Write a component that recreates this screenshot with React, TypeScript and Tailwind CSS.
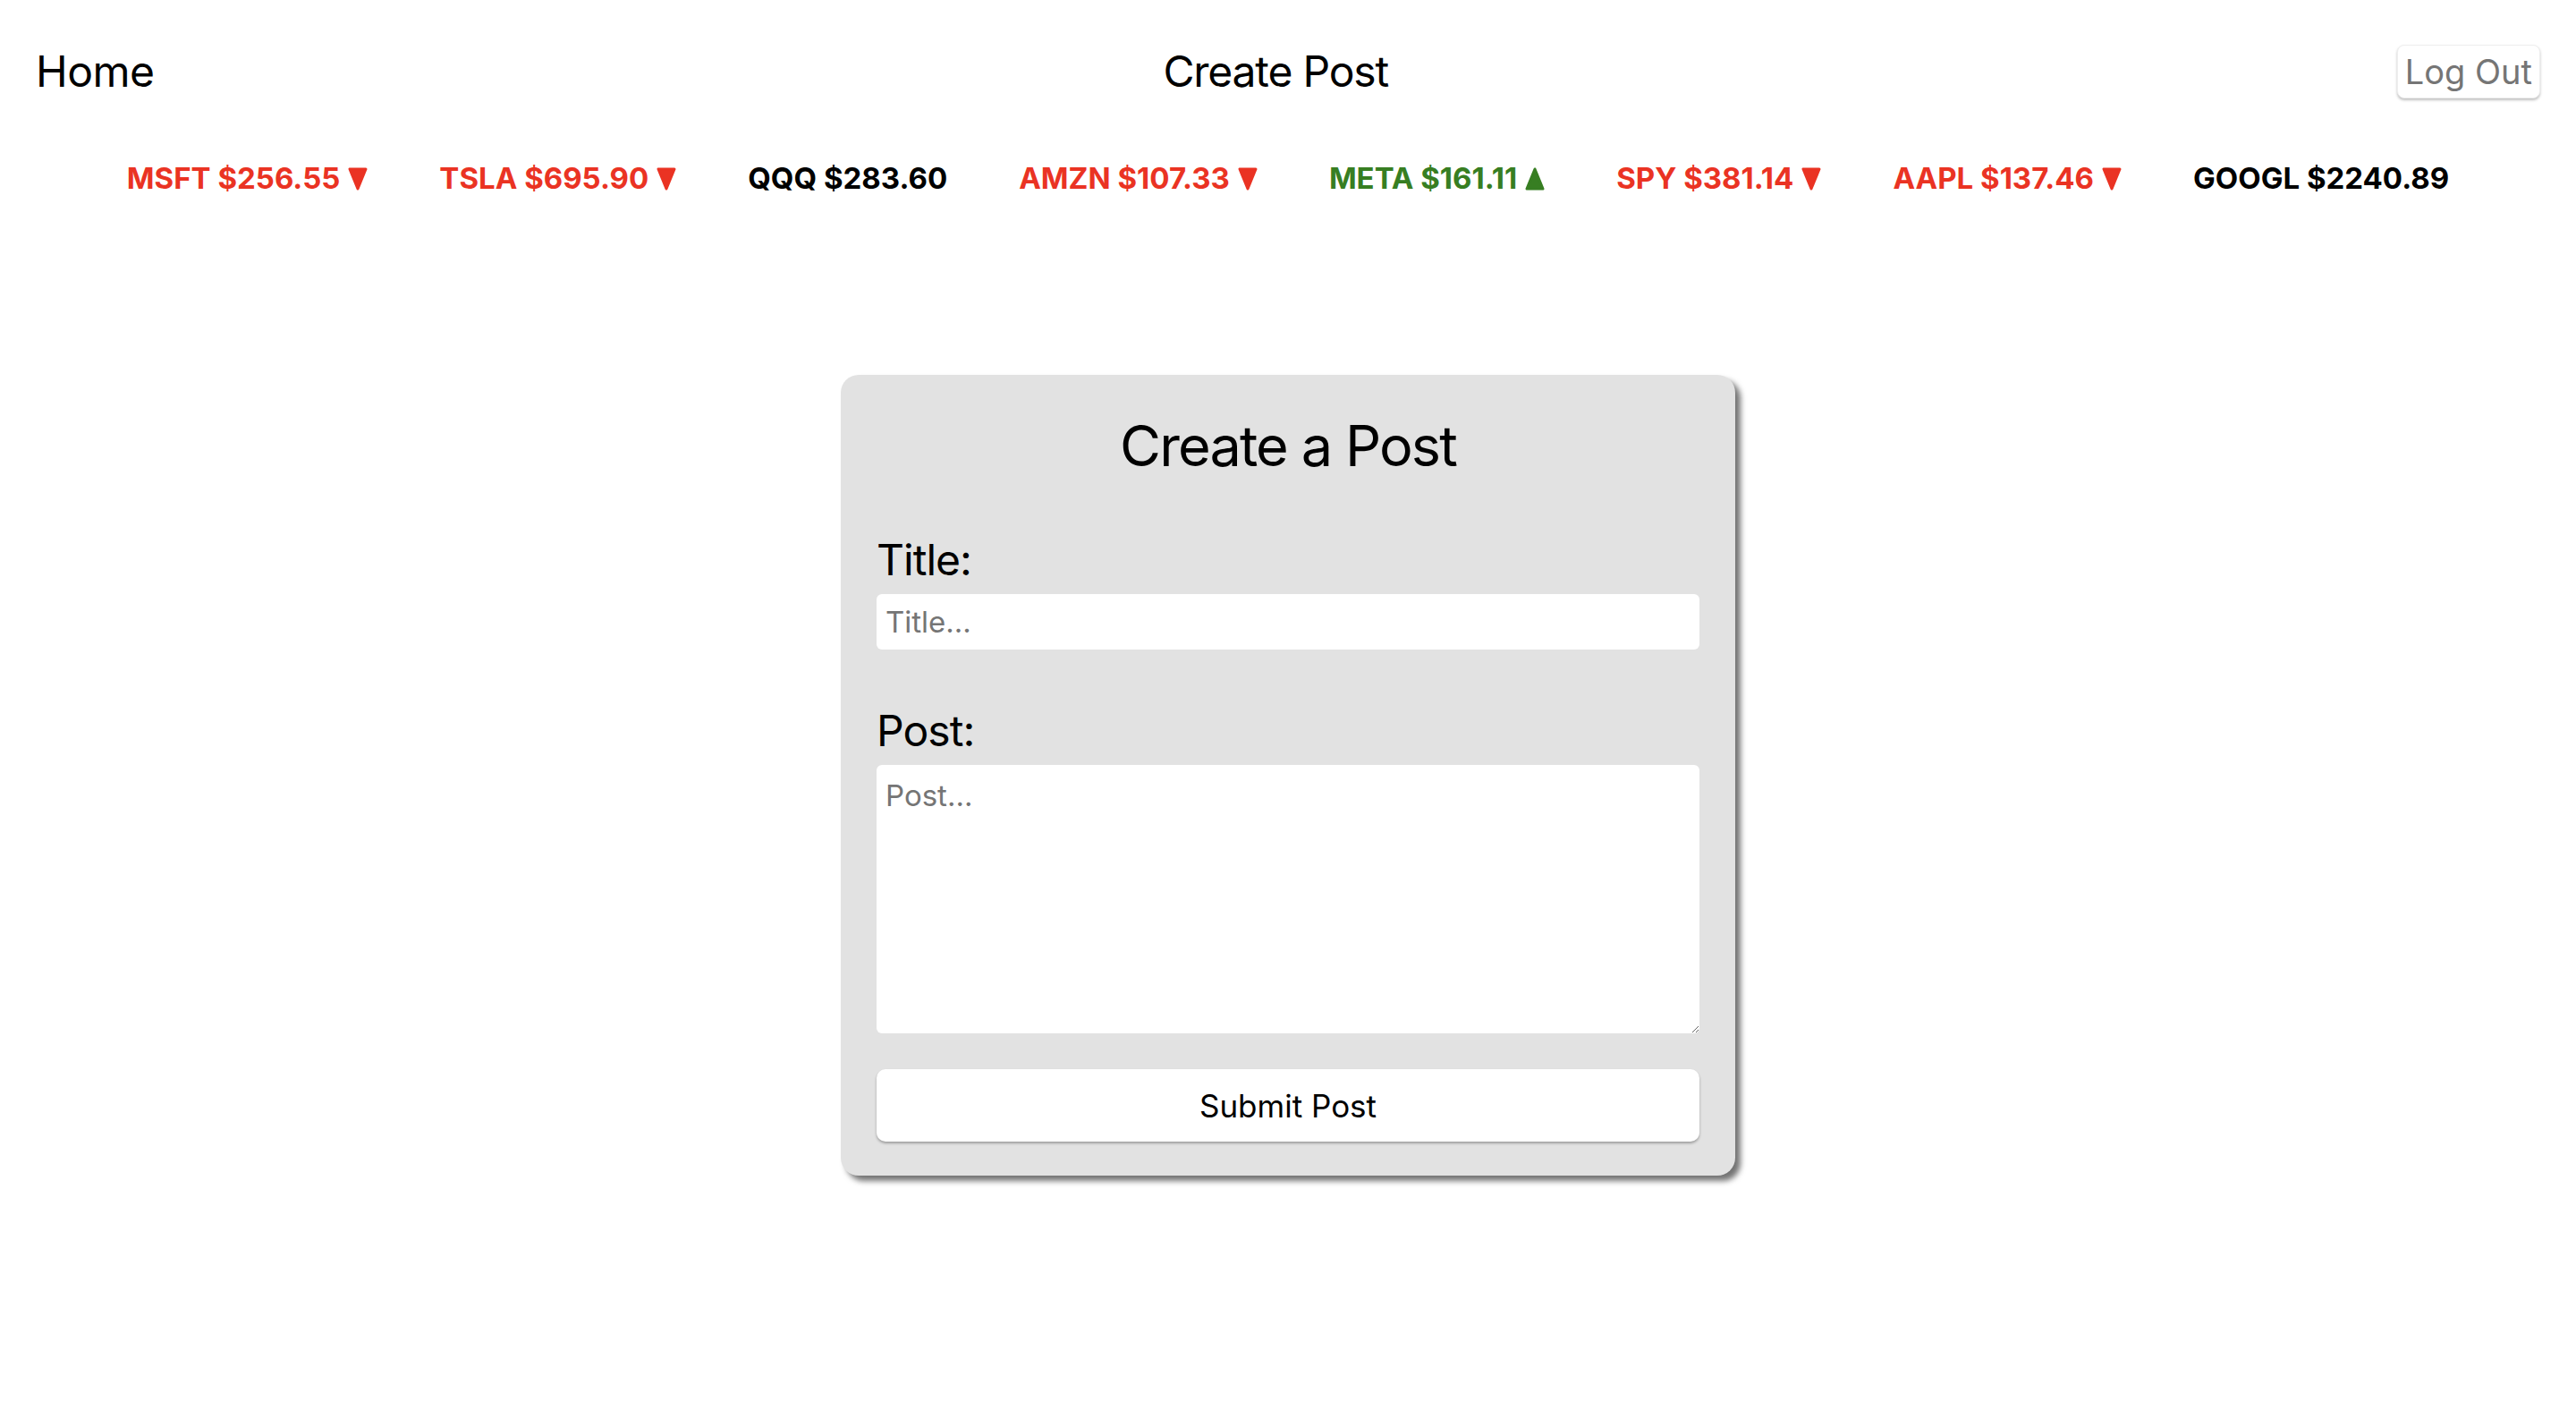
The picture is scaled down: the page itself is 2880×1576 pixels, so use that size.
import React from "react";

type Ticker = { sym: string; price: string; dir: "up" | "down" | "flat" };

const tickers: Ticker[] = [
  { sym: "MSFT", price: "$256.55", dir: "down" },
  { sym: "TSLA", price: "$695.90", dir: "down" },
  { sym: "QQQ", price: "$283.60", dir: "flat" },
  { sym: "AMZN", price: "$107.33", dir: "down" },
  { sym: "META", price: "$161.11", dir: "up" },
  { sym: "SPY", price: "$381.14", dir: "down" },
  { sym: "AAPL", price: "$137.46", dir: "down" },
  { sym: "GOOGL", price: "$2240.89", dir: "flat" },
];

function Tri({ up }: { up: boolean }) {
  return (
    <svg width="22" height="26" viewBox="0 0 22 26" className="ml-[9px] inline-block">
      {up ? (
        <polygon points="11,2 20,24 2,24" fill="currentColor" stroke="currentColor" strokeWidth="3" strokeLinejoin="round" />
      ) : (
        <polygon points="2,2 20,2 11,24" fill="currentColor" stroke="currentColor" strokeWidth="3" strokeLinejoin="round" />
      )}
    </svg>
  );
}

export default function App() {
  return (
    <div className="min-h-screen bg-white font-['Inter','Liberation_Sans',sans-serif] text-black">
      <header className="flex items-center justify-between px-[40px] pt-[50px]">
        <span className="text-[48px] leading-[1.2] tracking-[-0.01em]">Home</span>
        <span className="text-[48px] leading-[1.2] tracking-[-0.025em]">Create Post</span>
        <button className="h-[60px] rounded-[8px] border border-[#eeeeee] bg-white px-[8px] text-[38px] leading-none text-[#757575] shadow-[0_2px_3px_rgba(0,0,0,0.25)]">
          Log Out
        </button>
      </header>

      <div className="mt-[70px] flex items-center justify-center gap-[80px]">
        {tickers.map((t) => (
          <div
            key={t.sym}
            className={
              "flex items-center text-[33px] font-bold leading-[1.2] " +
              (t.dir === "down" ? "text-[#ea3323]" : t.dir === "up" ? "text-[#377e22]" : "text-black")
            }
          >
            <span>
              {t.sym} {t.price}
            </span>
            {t.dir !== "flat" && <Tri up={t.dir === "up"} />}
          </div>
        ))}
      </div>

      <div className="mx-auto mt-[199px] w-[1000px] rounded-[20px] bg-[#e2e2e2] px-[40px] pb-[38px] pt-[42px] shadow-[6px_6px_6px_rgba(0,0,0,0.55)]">
        <h1 className="text-center text-[63px] font-normal leading-[1.2] tracking-[-0.03em]">Create a Post</h1>

        <label className="mt-[61px] block text-[48px] leading-[1.2] tracking-[-0.02em]">Title:</label>
        <input
          placeholder="Title..."
          className="mt-[9px] block h-[62px] w-full rounded-[6px] bg-white px-[10px] text-[33px] outline-none placeholder:text-[#757575]"
        />

        <label className="mt-[62px] block text-[48px] leading-[1.2] tracking-[-0.02em]">Post:</label>
        <textarea
          placeholder="Post..."
          className="mt-[10px] block h-[300px] w-full rounded-[6px] bg-white px-[10px] py-[10px] text-[33px] outline-none placeholder:text-[#757575]"
        />

        <button className="mt-[40px] block h-[81px] w-full rounded-[10px] bg-white text-[35px] text-black shadow-[0_2px_3px_rgba(0,0,0,0.3)]">
          Submit Post
        </button>
      </div>
    </div>
  );
}
